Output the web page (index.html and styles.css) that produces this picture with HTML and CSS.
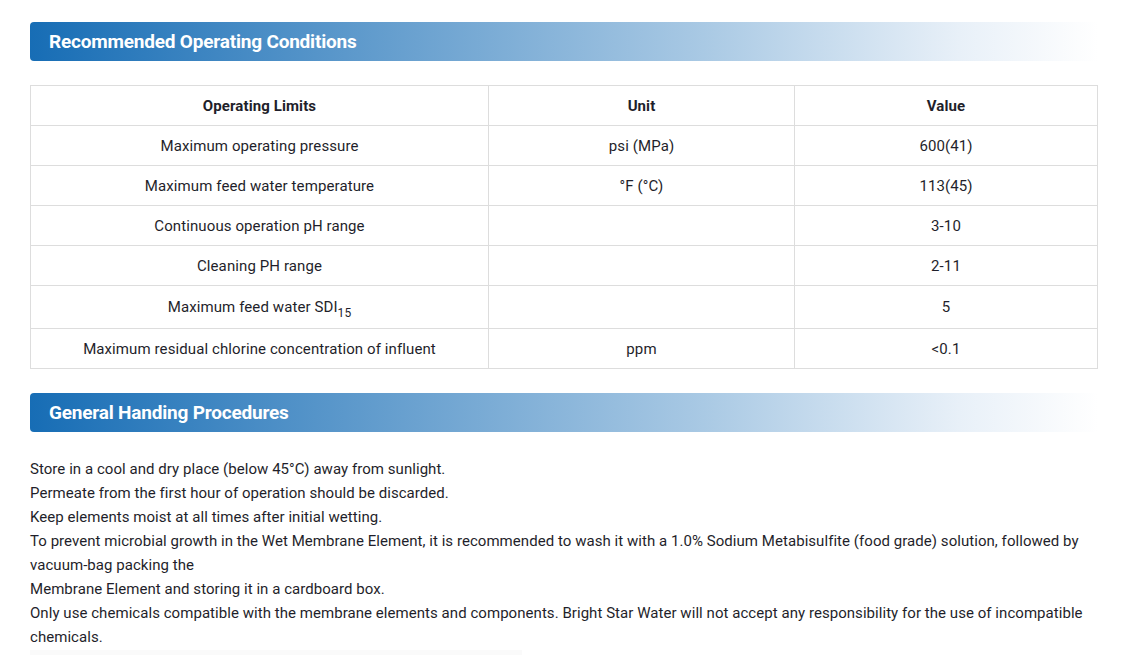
FILE: index.html
```
<!DOCTYPE html>
<html lang="en">
<head>
<meta charset="utf-8">
<title>Operating Conditions</title>
<link rel="stylesheet" href="styles.css">
</head>
<body>
<div class="page">
  <h2 class="section-title">Recommended Operating Conditions</h2>
  <table class="spec-table">
    <colgroup>
      <col class="col-a">
      <col class="col-b">
      <col class="col-c">
    </colgroup>
    <thead>
      <tr><th>Operating Limits</th><th>Unit</th><th>Value</th></tr>
    </thead>
    <tbody>
      <tr><td>Maximum operating pressure</td><td>psi (MPa)</td><td>600(41)</td></tr>
      <tr><td>Maximum feed water temperature</td><td>°F (°C)</td><td>113(45)</td></tr>
      <tr><td>Continuous operation pH range</td><td></td><td>3-10</td></tr>
      <tr><td>Cleaning PH range</td><td></td><td>2-11</td></tr>
      <tr><td>Maximum feed water SDI<sub>15</sub></td><td></td><td>5</td></tr>
      <tr><td>Maximum residual chlorine concentration of influent</td><td>ppm</td><td>&lt;0.1</td></tr>
    </tbody>
  </table>
  <h2 class="section-title second">General Handing Procedures</h2>
  <div class="procedures">
    <p>Store in a cool and dry place (below 45°C) away from sunlight.</p>
    <p>Permeate from the first hour of operation should be discarded.</p>
    <p>Keep elements moist at all times after initial wetting.</p>
    <p>To prevent microbial growth in the Wet Membrane Element, it is recommended to wash it with a 1.0% Sodium Metabisulfite (food grade) solution, followed by vacuum-bag packing the<br>Membrane Element and storing it in a cardboard box.</p>
    <p>Only use chemicals compatible with the membrane elements and components. Bright Star Water will not accept any responsibility for the use of incompatible chemicals.</p>
  </div>
  <div class="footer-strip"></div>
</div>
</body>
</html>
```
FILE: styles.css
```
html, body {
  margin: 0;
  padding: 0;
  background: #fff;
}
body {
  font-family: Roboto, "Liberation Sans", Arial, sans-serif;
  color: #1f1f2b;
  font-size: 15px;
  letter-spacing: 0.1px;
}
.page {
  width: 1068px;
  padding: 22px 0 0 30px;
}
.section-title {
  margin: 0;
  height: 39px;
  line-height: 39px;
  padding-left: 19px;
  font-size: 19px;
  font-weight: 700;
  color: #fff;
  border-radius: 4px 0 0 4px;
  background: linear-gradient(to right, #176db5 0%, #a9c9e4 63%, #e8f0f8 87%, #ffffff 100%);
  letter-spacing: -0.2px;
}
.section-title.second {
  margin-top: 24px;
}
.spec-table {
  margin-top: 24px;
  width: 1067px;
  border-collapse: collapse;
  table-layout: fixed;
}
.col-a { width: 458px; }
.col-b { width: 306px; }
.col-c { width: 303px; }
.spec-table th,
.spec-table td {
  border: 1px solid #dddddd;
  text-align: center;
  padding: 10px 10px 8px;
  line-height: 21px;
  font-size: 15px;
}
.spec-table th {
  font-weight: 700;
}
.spec-table sub {
  font-size: 12px;
  vertical-align: -5px;
  line-height: 0;
}
.spec-table tbody tr:nth-child(5) td {
  padding-top: 11px;
  padding-bottom: 10px;
}
.procedures {
  margin-top: 25px;
  line-height: 24px;
  letter-spacing: 0.05px;
}
.procedures p {
  margin: 0;
}
.footer-strip {
  margin-top: 1px;
  width: 492px;
  height: 10px;
  background: #fafafa;
}
```
